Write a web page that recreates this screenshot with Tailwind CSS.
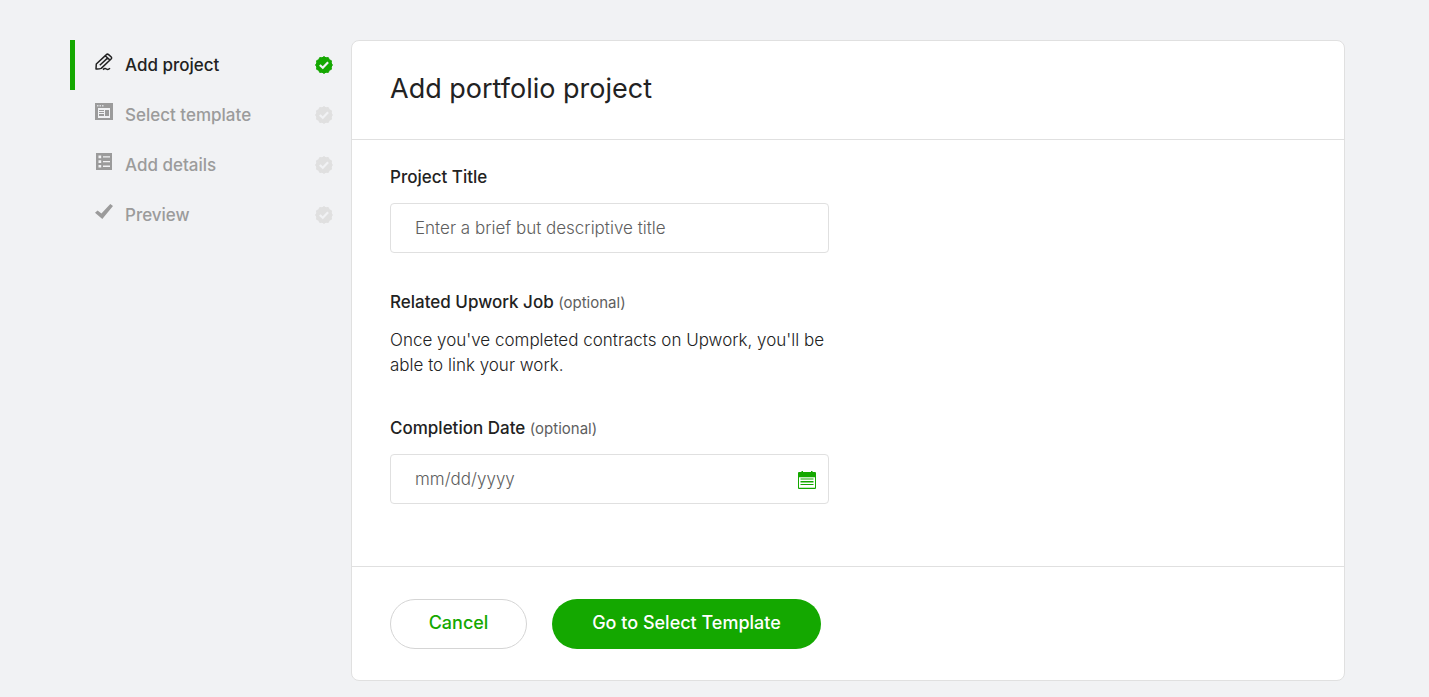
<!DOCTYPE html>
<html lang="en">
<head>
<meta charset="utf-8">
<meta name="viewport" content="width=device-width, initial-scale=1">
<title>Add portfolio project</title>
<script src="https://cdn.jsdelivr.net/npm/@tailwindcss/browser@4"></script>
</head>
<body class="min-h-screen bg-[#f1f2f4] font-['Inter','Liberation_Sans',sans-serif] text-[17px] leading-[25px] text-[#222]">
<svg class="hidden" aria-hidden="true">
  <symbol id="badge" viewBox="0 0 18 18">
    <path fill="currentColor" stroke="currentColor" stroke-width="1" stroke-linejoin="round" d="M9 .6 11 1.8 13.3 1.6 14.3 3.7 16.4 4.7 16.2 7 17.4 9 16.2 11 16.4 13.3 14.3 14.3 13.3 16.4 11 16.2 9 17.4 7 16.2 4.7 16.4 3.7 14.3 1.6 13.3 1.8 11 .6 9 1.8 7 1.6 4.7 3.7 3.7 4.7 1.6 7 1.8Z"/>
    <path fill="none" stroke="#f1f2f4" stroke-width="2.2" d="m4.8 9 3 2.8 5.3-5.6"/>
  </symbol>
</svg>
<div class="flex items-start pt-10 pr-[84px] pb-4 pl-[70px]">
  <nav class="w-[281px] shrink-0 font-medium text-[#9b9b9b]" aria-label="Project steps">
    <ol>
      <li>
        <a href="#" aria-current="step" class="flex h-[50px] items-center border-l-5 border-[#14a800] pr-[18px] pl-5 text-[#222]">
          <svg class="mr-3 mb-1.5 size-[18px]" viewBox="0 0 18 18" fill="none" stroke="currentColor" stroke-width="1.5" stroke-linejoin="round" aria-hidden="true"><path d="M1 16 1.3 11 11.4 1.6Q12.4.6 13.6 1.6L16 3.8Q17.2 5 16.1 6L6.2 15.4Q4 16.2 1 16ZM4.8 12.3 13 4.6M10.2 2.8 15 7.1M8 16.6Q9.8 14.9 11.4 16T15 15.2"/></svg>
          <span>Add project</span>
          <svg class="ml-auto size-[18px] text-[#14a800]" aria-hidden="true"><use href="#badge"/></svg>
        </a>
      </li>
      <li>
        <a href="#" class="flex h-[50px] items-center pr-[18px] pl-[25px]">
          <svg class="mr-3 mb-1.5 size-[18px]" viewBox="0 0 18 18" aria-hidden="true"><path fill="currentColor" d="M0 0H18V17H0Z"/><path fill="#dcdde0" d="M2 2H3.5V3.5H2ZM4.5 2H6V3.5H4.5ZM7 2H8.5V3.5H7Z"/><path fill="#f1f2f4" d="M3 5H15V15H3Z"/><path fill="currentColor" d="M4 7H9V8H4ZM4 9H9V10H4ZM4 11H9V13H4ZM10 7H14V13H10Z"/></svg>
          <span>Select template</span>
          <svg class="ml-auto size-[18px] text-[#e0e0e0]" aria-hidden="true"><use href="#badge"/></svg>
        </a>
      </li>
      <li>
        <a href="#" class="flex h-[50px] items-center pr-[18px] pl-[25px]">
          <svg class="mr-3 mb-1.5 size-[18px]" viewBox="0 0 18 18" aria-hidden="true"><path fill="currentColor" d="M1 0H17V17H1Z"/><path fill="#f1f2f4" d="M3.5 2.5H6.2V5.2H3.5ZM3.5 7.2H6.2V9.9H3.5ZM3.5 11.9H6.2V14.6H3.5ZM8 3.2H15V4.5H8ZM8 7.9H15V9.2H8ZM8 12.6H15V13.9H8Z"/></svg>
          <span>Add details</span>
          <svg class="ml-auto size-[18px] text-[#e0e0e0]" aria-hidden="true"><use href="#badge"/></svg>
        </a>
      </li>
      <li>
        <a href="#" class="flex h-[50px] items-center pr-[18px] pl-[25px]">
          <svg class="mr-3 mb-1.5 size-[18px]" viewBox="0 0 18 18" aria-hidden="true"><path fill="currentColor" d="M0 9.8 2.6 7.4 6.4 10.6 15.3.9 18 3 7.3 16Z"/></svg>
          <span>Preview</span>
          <svg class="ml-auto size-[18px] text-[#e0e0e0]" aria-hidden="true"><use href="#badge"/></svg>
        </a>
      </li>
    </ol>
  </nav>

  <main class="min-w-0 flex-1 rounded-lg border border-[#e0e0e0] bg-white">
    <form>
      <header class="border-b border-[#e0e0e0] px-[38px] pt-[30px] pb-8">
        <h1 class="text-[27px] leading-9">Add portfolio project</h1>
      </header>

      <div class="px-[38px] pt-[25px] pb-[62px]">
        <div class="w-[439px] max-w-full">
          <label for="title" class="block font-medium">Project Title</label>
          <input id="title" type="text" placeholder="Enter a brief but descriptive title" class="mt-[13px] block h-[50px] w-full rounded border border-[#e0e0e0] px-6 font-light placeholder:text-[#5e5e5e]">

          <h2 class="mt-[37px] font-medium">Related Upwork Job <span class="text-[15px] font-normal text-[#5e5e5e]">(optional)</span></h2>
          <p class="mt-[13px] font-light">Once you've completed contracts on Upwork, you'll be able to link your work.</p>

          <label for="date" class="mt-[38px] block font-medium">Completion Date <span class="text-[15px] font-normal text-[#5e5e5e]">(optional)</span></label>
          <div class="mt-[13px] flex h-[50px] items-center rounded border border-[#e0e0e0] pr-3 pl-6">
            <input id="date" type="text" placeholder="mm/dd/yyyy" class="min-w-0 flex-1 font-light outline-none placeholder:text-[#5e5e5e]">
            <button type="button" aria-label="Choose date" class="pt-0.5 text-[#14a800]">
              <svg class="block size-[18px]" viewBox="0 0 18 18" aria-hidden="true"><path fill="currentColor" d="M0 2Q0 1 1 1H3.5V0H5V1H13V0H14.5V1H17Q18 1 18 2V17Q18 18 17 18H1Q0 18 0 17Z"/><path fill="#fff" d="M1 6H17V17H1Z"/><path fill="#14a80040" d="M1 6H17V7H1ZM1 16H17V17H1Z"/><path fill="currentColor" d="M2.5 7.5H15.5V8.5H2.5ZM2.5 10H15.5V11.5H2.5ZM2.5 13H15.5V14H2.5Z"/></svg>
            </button>
          </div>
        </div>
      </div>

      <footer class="flex flex-wrap gap-[25px] border-t border-[#e0e0e0] px-[38px] pt-8 pb-[31px] text-[18px]">
        <button type="button" class="h-[50px] w-[137px] rounded-full border border-[#d5d5d5] pb-1 font-medium text-[#14a800]">Cancel</button>
        <button type="submit" class="h-[50px] w-[269px] rounded-full bg-[#14a800] pb-1 font-medium text-white">Go to Select Template</button>
      </footer>
    </form>
  </main>
</div>
</body>
</html>
